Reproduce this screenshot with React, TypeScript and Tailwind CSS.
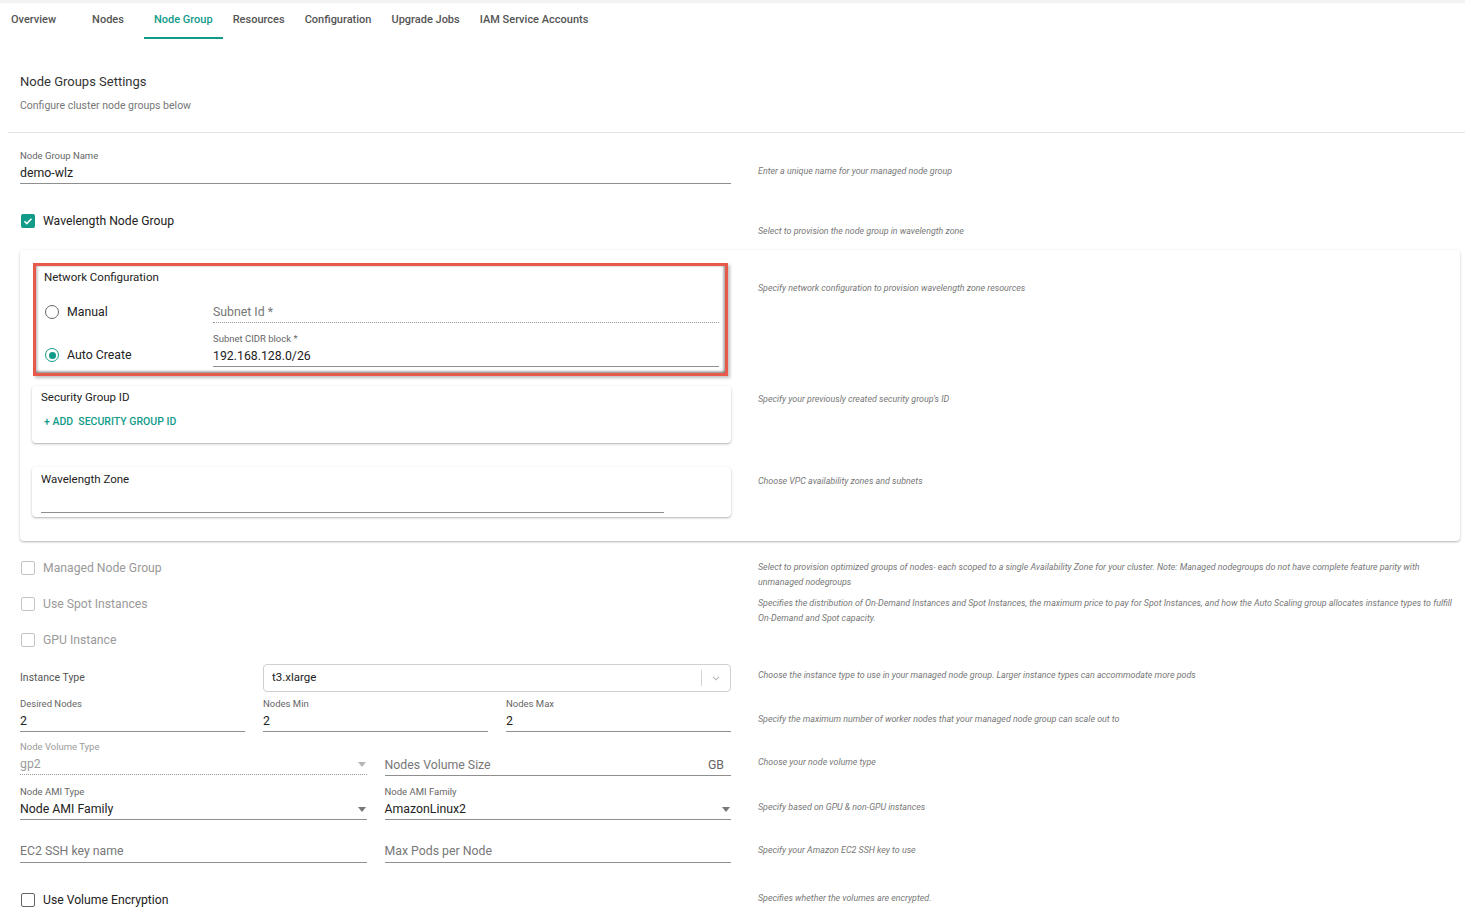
import type { ReactNode } from 'react'

const TEAL = 'text-[#119b88]'

const tabs = ['Overview', 'Nodes', 'Node Group', 'Resources', 'Configuration', 'Upgrade Jobs', 'IAM Service Accounts']

function Help({ children, className = '' }: { children: ReactNode; className?: string }) {
  return <div className={`text-[8.9px] leading-[12px] italic text-[#777] ${className}`}>{children}</div>
}

function Checkbox({ checked, disabled }: { checked?: boolean; disabled?: boolean }) {
  if (checked) {
    return (
      <span className="w-[14px] h-[14px] rounded-[2px] bg-[#119b88] flex items-center justify-center shrink-0">
        <svg viewBox="0 0 24 24" className="w-[12px] h-[12px]" fill="none" stroke="white" strokeWidth="3.2">
          <path d="M5 12.5l4.5 4.5L19 7.5" />
        </svg>
      </span>
    )
  }
  return (
    <span
      className={`w-[14px] h-[14px] rounded-[2px] border-[1.5px] shrink-0 ${disabled ? 'border-[#c4c4c4]' : 'border-[#666]'}`}
    />
  )
}

function CheckRow({ label, checked, disabled }: { label: string; checked?: boolean; disabled?: boolean }) {
  return (
    <div className="flex items-center h-[16px] pl-[1px]">
      <Checkbox checked={checked} disabled={disabled} />
      <span className={`ml-[8px] text-[12.2px] ${disabled ? 'text-[#9a9a9a]' : 'text-[#222]'}`}>{label}</span>
    </div>
  )
}

function Radio({ checked }: { checked?: boolean }) {
  return (
    <span
      className={`w-[14px] h-[14px] rounded-full border-[1.5px] flex items-center justify-center shrink-0 ${
        checked ? 'border-[#119b88]' : 'border-[#666]'
      }`}
    >
      {checked && <span className="w-[7px] h-[7px] rounded-full bg-[#119b88]" />}
    </span>
  )
}

function Caret({ light }: { light?: boolean }) {
  return (
    <svg viewBox="0 0 10 6" className="w-[8px] h-[5px] mb-[5px] mr-[1px]">
      <path d="M0 0h10L5 6z" fill={light ? '#b5b5b5' : '#777'} />
    </svg>
  )
}

function Field({
  label,
  value,
  placeholder,
  dotted,
  disabled,
  caret,
  suffix,
}: {
  label?: string
  value?: string
  placeholder?: string
  dotted?: boolean
  disabled?: boolean
  caret?: boolean
  suffix?: string
}) {
  return (
    <div className={`flex flex-col pb-[2px] border-b ${dotted ? 'border-dotted border-[#9a9a9a]' : 'border-[#8f8f8f]'}`}>
      {label && <div className={`text-[9.5px] leading-[12px] ${disabled ? 'text-[#9a9a9a]' : 'text-[#666]'}`}>{label}</div>}
      <div className={`flex items-end justify-between ${label ? 'mt-[3px]' : ''}`}>
        <span
          className={`text-[12.3px] leading-[16px] ${
            value ? (disabled ? 'text-[#9a9a9a]' : 'text-[#222]') : 'text-[#777]'
          }`}
        >
          {value ?? placeholder}
        </span>
        {caret && <Caret light={disabled} />}
        {suffix && <span className="text-[12.3px] leading-[16px] text-[#666] mr-[7px]">{suffix}</span>}
      </div>
    </div>
  )
}

function Row({ left, help, helpClass = '', className = '' }: { left: ReactNode; help: ReactNode; helpClass?: string; className?: string }) {
  return (
    <div className={`flex ${className}`}>
      <div className="w-[711px] shrink-0">{left}</div>
      <div className={`ml-[27px] flex-1 pr-[12px] ${helpClass}`}>{help}</div>
    </div>
  )
}

export default function App() {
  return (
    <div className="w-[1465px] min-h-[910px] bg-white font-['Roboto','Liberation_Sans',sans-serif] overflow-hidden">
      <div className="h-[3px] bg-[#f1f2f4]" />
      <div className="flex h-[36px]">
        {tabs.map((t) => {
          const active = t === 'Node Group'
          return (
            <div
              key={t}
              className={`min-w-[72px] flex items-center text-[11px] font-medium border-b-2 ${
                active ? `${TEAL} border-[#119b88]` : 'text-[#555] border-transparent'
              } ${t === 'Overview' ? 'w-[72px] pl-[11px] justify-start' : 'px-[10px] justify-center'}`}
            >
              {t}
            </div>
          )
        })}
      </div>

      <div className="pl-[20px] pt-[35px]">
        <div className="text-[13px] leading-[16px] text-[#333]">Node Groups Settings</div>
        <div className="mt-[9px] text-[10.5px] leading-[14px] text-[#777]">Configure cluster node groups below</div>
      </div>
      <div className="ml-[8px] mt-[19px] h-px bg-[#e3e3e3]" />

      <div className="pl-[20px]">
        <Row
          className="mt-[17px]"
          left={<Field label="Node Group Name" value="demo-wlz" />}
          help={<Help>Enter a unique name for your managed node group</Help>}
          helpClass="pt-[15px]"
        />

        <Row
          className="mt-[27px]"
          left={<div className="h-[20px] flex items-center"><CheckRow label="Wavelength Node Group" checked /></div>}
          help={<Help>Select to provision the node group in wavelength zone</Help>}
          helpClass="pt-[14px]"
        />

        {/* wavelength panel */}
        <div className="mt-[13px] mr-[5px] rounded-[4px] bg-white shadow-[0_1px_3px_rgba(0,0,0,0.22),0_1px_1px_rgba(0,0,0,0.1)] pt-[13px] pb-[24px] pl-[12px]">
          <div className="flex">
            <div className="w-[699px] shrink-0">
              <div className="ml-[1px] mr-[3px] border-[3px] border-[#e8584b] shadow-[2px_2px_3px_rgba(0,0,0,0.25)]">
                <div className="shadow-[inset_0_-2px_2px_rgba(0,0,0,0.3),inset_2px_0_2px_rgba(0,0,0,0.15),inset_-2px_0_2px_rgba(0,0,0,0.25)] pl-[8px] pr-[6px] pt-[4px] pb-[6px]">
                  <div className="text-[11.5px] leading-[14px] text-[#222]">Network Configuration</div>
                  <div className="flex mt-[20px]">
                    <div className="w-[169px] h-[16px] flex items-center pl-[1px]">
                      <Radio />
                      <span className="ml-[8px] text-[12.3px] text-[#222]">Manual</span>
                    </div>
                    <div className="flex-1">
                      <Field placeholder="Subnet Id *" dotted />
                    </div>
                  </div>
                  <div className="flex mt-[10px]">
                    <div className="w-[169px] pt-[14px]">
                      <div className="h-[16px] flex items-center pl-[1px]">
                        <Radio checked />
                        <span className="ml-[8px] text-[12.3px] text-[#222]">Auto Create</span>
                      </div>
                    </div>
                    <div className="flex-1">
                      <Field label="Subnet CIDR block *" value="192.168.128.0/26" />
                    </div>
                  </div>
                </div>
              </div>

              <div className="mt-[10px] rounded-[4px] shadow-[0_1px_3px_rgba(0,0,0,0.22),0_1px_1px_rgba(0,0,0,0.1)] pl-[9px] pt-[4px] pb-[14px]">
                <div className="text-[11.5px] leading-[14px] text-[#222]">Security Group ID</div>
                <div className={`mt-[11px] ml-[3px] text-[10.5px] leading-[14px] font-medium uppercase ${TEAL}`}>
                  + Add&nbsp; Security Group ID
                </div>
              </div>

              <div className="mt-[24px] rounded-[4px] shadow-[0_1px_3px_rgba(0,0,0,0.22),0_1px_1px_rgba(0,0,0,0.1)] pl-[9px] pt-[5px] pb-[4px]">
                <div className="text-[11.5px] leading-[14px] text-[#222]">Wavelength Zone</div>
                <div className="mt-[26px] w-[623px] border-b border-[#8f8f8f]" />
              </div>
            </div>

            <div className="ml-[27px] flex-1 flex flex-col">
              <Help className="mt-[19px]">Specify network configuration to provision wavelength zone resources</Help>
              <Help className="mt-[99px]">Specify your previously created security group's ID</Help>
              <Help className="mt-[70px]">Choose VPC availability zones and subnets</Help>
            </div>
          </div>
        </div>

        <Row
          className="mt-[19px] h-[36px]"
          left={<CheckRow label="Managed Node Group" disabled />}
          help={
            <div className="text-[8.9px] leading-[15px] italic text-[#777]">
              Select to provision optimized groups of nodes- each scoped to a single Availability Zone for your cluster. Note: Managed nodegroups do not have complete feature parity with unmanaged nodegroups
            </div>
          }
        />
        <Row
          className="h-[36px]"
          left={<CheckRow label="Use Spot Instances" disabled />}
          help={
            <div className="text-[8.9px] leading-[15px] italic text-[#777]">
              Specifies the distribution of On-Demand Instances and Spot Instances, the maximum price to pay for Spot Instances, and how the Auto Scaling group allocates instance types to fulfill On-Demand and Spot capacity.
            </div>
          }
        />
        <Row className="h-[32px]" left={<CheckRow label="GPU Instance" disabled />} help={null} />

        <Row
          left={
            <div className="flex items-center">
              <div className="w-[243px] text-[10.5px] text-[#555]">Instance Type</div>
              <div className="flex-1 h-[28px] border border-[#cfcfcf] rounded-[4px] flex items-center pl-[8px]">
                <span className="flex-1 text-[11.5px] text-[#222]">t3.xlarge</span>
                <span className="w-px h-[16px] bg-[#d4d4d4]" />
                <svg viewBox="0 0 20 20" className="w-[12px] h-[12px] mx-[8px]" fill="none" stroke="#b3b3b3" strokeWidth="1.8">
                  <path d="M5 8l5 5 5-5" />
                </svg>
              </div>
            </div>
          }
          help={<Help>Choose the instance type to use in your managed node group. Larger instance types can accommodate more pods</Help>}
          helpClass="pt-[5px]"
        />

        <Row
          className="mt-[6px]"
          left={
            <div className="grid grid-cols-3 gap-[18px]">
              <Field label="Desired Nodes" value="2" />
              <Field label="Nodes Min" value="2" />
              <Field label="Nodes Max" value="2" />
            </div>
          }
          help={<Help>Specify the maximum number of worker nodes that your managed node group can scale out to</Help>}
          helpClass="pt-[15px]"
        />

        <Row
          className="mt-[9px]"
          left={
            <div className="grid grid-cols-2 gap-[18px] items-end">
              <Field label="Node Volume Type" value="gp2" dotted disabled caret />
              <div className="mb-[-1px]">
                <Field placeholder="Nodes Volume Size" suffix="GB" />
              </div>
            </div>
          }
          help={<Help>Choose your node volume type</Help>}
          helpClass="pt-[15px]"
        />

        <Row
          className="mt-[11px]"
          left={
            <div className="grid grid-cols-2 gap-[18px] items-end">
              <Field label="Node AMI Type" value="Node AMI Family" caret />
              <Field label="Node AMI Family" value="AmazonLinux2" caret />
            </div>
          }
          help={<Help>Specify based on GPU &amp; non-GPU instances</Help>}
          helpClass="pt-[15px]"
        />

        <Row
          className="mt-[23px]"
          left={
            <div className="grid grid-cols-2 gap-[18px] items-end">
              <div className="[&>div]:pb-[3px]">
                <Field placeholder="EC2 SSH key name" />
              </div>
              <div className="[&>div]:pb-[3px]">
                <Field placeholder="Max Pods per Node" />
              </div>
            </div>
          }
          help={<Help>Specify your Amazon EC2 SSH key to use</Help>}
          helpClass="pt-[1px]"
        />

        <Row
          className="mt-[29px]"
          left={<CheckRow label="Use Volume Encryption" />}
          help={<Help>Specifies whether the volumes are encrypted.</Help>}
        />
      </div>
    </div>
  )
}
